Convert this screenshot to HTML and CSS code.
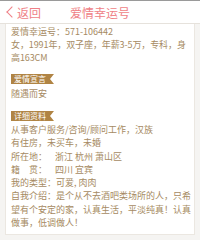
FILE: index.html
```html
<!DOCTYPE html>
<html lang="zh">
<head>
<meta charset="utf-8">
<link rel="stylesheet" href="styles.css">
</head>
<body>
<header class="bar">
  <a class="back"><span class="chev"></span>返回</a>
  <h1 class="title">爱情幸运号</h1>
</header>
<main class="card">
  <p class="line">爱情幸运号：571-106442</p>
  <p class="line tight">女，1991年，双子座，年薪3-5万，专科，身<br>高163CM</p>
  <div class="tag">爱情宣言</div>
  <p class="line">随遇而安</p>
  <div class="tag tag2">详细资料</div>
  <div class="detail">
    <p class="line">从事客户服务/咨询/顾问工作，汉族</p>
    <p class="line">有住房，未买车，未婚</p>
    <p class="line row"><span class="lbl">所在地：</span><span>浙江 杭州 萧山区</span></p>
    <p class="line row"><span class="lbl">籍　贯：</span><span>四川 宜宾</span></p>
    <p class="line row"><span class="lbl">我的类型：</span><span>可爱, 肉肉</span></p>
    <p class="line">自我介绍：是个从不去酒吧类场所的人，只希望有个安定的家，认真生活，平淡纯真！认真做事，低调做人！</p>
  </div>
</main>
</body>
</html>
```
FILE: styles.css
```css
html, body { margin: 0; padding: 0; }
body {
  width: 200px;
  height: 240px;
  overflow: hidden;
  background: #f5f4f2;
  font-family: "Noto Sans CJK SC", "Liberation Sans", sans-serif;
  border-top: 1px solid #9a9a9a;
  box-sizing: border-box;
}
.bar {
  height: 23px;
  background: #fff;
  border-bottom: 1px solid #e6e2dc;
  display: flex;
  align-items: center;
  position: relative;
  box-sizing: border-box;
}
.back {
  display: flex;
  align-items: center;
  color: #ef7f86;
  font-size: 12px;
  padding-left: 5px;
  gap: 1px;
}
.chev {
  width: 7px;
  height: 7px;
  border-left: 1px solid #ef7f86;
  border-bottom: 1px solid #ef7f86;
  transform: rotate(45deg);
  margin-left: 3px;
}
.title {
  position: absolute;
  left: 0; right: 0;
  margin: 0;
  text-align: center;
  font-size: 12px;
  font-weight: normal;
  color: #ef7f86;
}
.card {
  margin: 0 5px 0 5px;
  background: #fff;
  border: 1px solid #ebe7e1;
  border-top: none;
  padding: 1px 0 5px 5px;
  color: #a68a62;
  font-size: 9px;
  line-height: 13px;
}
.line { margin: 0; }
.tight { letter-spacing: -0.1px; }
.detail { line-height: 13.3px; }
.row { display: flex; }
.lbl { min-width: 44px; flex: none; white-space: nowrap; }
.tag {
  display: block;
  width: fit-content;
  margin-top: 10px;
  margin-bottom: 3px;
  height: 10px;
  line-height: 10px;
  padding: 0 8px 0 3px;
  background: #b08444;
  color: #fff;
  font-size: 8px;
  clip-path: polygon(0 0, 100% 0, calc(100% - 4px) 50%, 100% 100%, 0 100%);
}
.tag2 { margin-top: 11px; margin-bottom: 2px; }
```
